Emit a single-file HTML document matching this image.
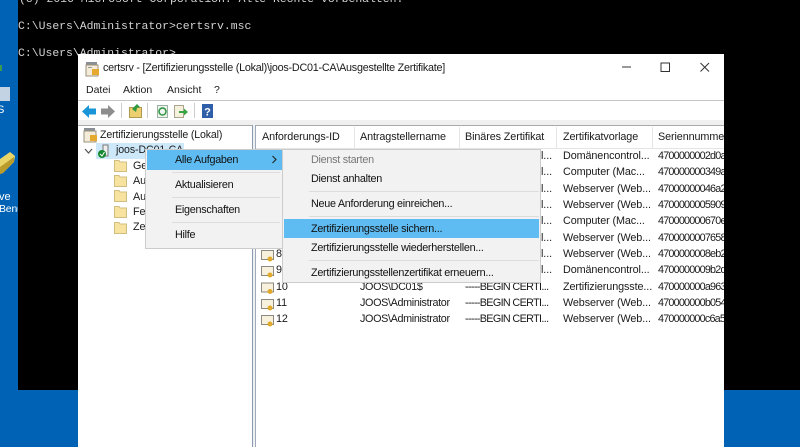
<!DOCTYPE html>
<html><head><meta charset="utf-8">
<style>
html,body{margin:0;padding:0;width:800px;height:447px;overflow:hidden;background:#0062b4}
*{box-sizing:border-box}
.a{position:absolute;white-space:nowrap}
#root{position:relative;width:800px;height:447px;overflow:hidden;font-family:"Liberation Sans",sans-serif;font-size:10.8px;color:#1a1a1a;filter:blur(.3px)}
.con{font-family:"Liberation Mono",monospace;font-size:11.45px;color:#d4d4d4}
.r{line-height:14px;height:14px;letter-spacing:-.1px}
.m{font-size:10.8px;color:#111;line-height:14px;letter-spacing:-.27px}
.b{letter-spacing:-.65px}
.n{letter-spacing:-.8px}
svg{position:absolute;overflow:visible}
</style></head><body><div id="root">
<!-- desktop -->
<div class="a" style="left:0;top:0;width:18px;height:447px;background:#0062b4"></div>
<div class="a" style="left:0;top:65px;width:2px;height:6px;background:#3a9a50"></div>
<div class="a" style="left:0;top:87px;width:10px;height:14px;background:#c3d3e4"></div>
<div class="a" style="left:-3px;top:104px;font-size:11px;color:#fff;line-height:13px">S</div>
<svg style="left:0;top:150px" width="18" height="30"><path d="M0 9L10 2L15 6L14 12L3 23L0 24Z" fill="#e9d468"/><path d="M0 17L14 7L14 12L3 23L0 24Z" fill="#b99c2c"/></svg>
<div class="a" style="left:-1px;top:191px;font-size:11px;color:#fff;line-height:13px">ve</div>
<div class="a" style="left:-1px;top:203px;width:19px;overflow:hidden;font-size:10.5px;letter-spacing:-.2px;color:#fff;line-height:13px">Benu</div>
<!-- console -->
<div class="a" style="left:18px;top:0;width:782px;height:390px;background:#000"></div>
<div class="a con" style="left:19px;top:-7px">(c) 2016 Microsoft Corporation. Alle Rechte vorbehalten.</div>
<div class="a con" style="left:18px;top:20px">C:\Users\Administrator&gt;certsrv.msc</div>
<div class="a con" style="left:18px;top:47px">C:\Users\Administrator&gt;</div>
<!-- window -->
<div class="a" style="left:78px;top:54px;width:646px;height:393px;background:#fff"></div>
<svg style="left:85px;top:61px" width="16" height="16"><rect x="1" y="1" width="11" height="3" fill="#8a8f96"/><rect x="1" y="4" width="12" height="11" fill="#f4ecd8" stroke="#9a927c"/><rect x="7" y="8" width="7" height="6" fill="#e4a92e"/><rect x="3" y="6" width="4" height="1" fill="#999"/></svg>
<div class="a" style="left:103px;top:61px;font-size:10.8px;line-height:14px;color:#1a1a1a;letter-spacing:-.25px">certsrv - [Zertifizierungsstelle (Lokal)\joos-DC01-CA\Ausgestellte Zertifikate]</div>
<svg style="left:655px;top:58px" width="65" height="20"><path d="M-33 9H-24" stroke="#333" stroke-width="1"/><rect x="6" y="5" width="8.5" height="8.5" fill="none" stroke="#333"/><path d="M45.500 5L54 13.500M54 5L45.500 13.500" stroke="#333"/></svg>
<div class="a" style="left:86px;top:83px;font-size:10.5px;line-height:14px">Datei</div>
<div class="a" style="left:123px;top:83px;font-size:10.5px;line-height:14px">Aktion</div>
<div class="a" style="left:167px;top:83px;font-size:10.5px;line-height:14px">Ansicht</div>
<div class="a" style="left:214px;top:83px;font-size:10.5px;line-height:14px">?</div>
<div class="a" style="left:78px;top:100px;width:646px;height:1px;background:#c6c6c6"></div>
<!-- toolbar -->
<svg style="left:78px;top:101px" width="160" height="22">
<path d="M4 10.500L11 4V7.500H18V13.500H11V17Z" fill="#1a96d8"/>
<path d="M37 10.500L30 4V7.500H23V13.500H30V17Z" fill="#8d8d8d"/>
<rect x="43" y="2" width="1" height="15" fill="#ccc"/>
<rect x="51.500" y="6.500" width="12" height="10" fill="#eccf6e" stroke="#b09a52"/><path d="M54 8L59 3L62 6L59 7L58 11Z" fill="#2f9a3f"/>
<rect x="69" y="2" width="1" height="15" fill="#ccc"/>
<rect x="79.500" y="4.500" width="10" height="12" fill="#eef4ee" stroke="#9bb2a0"/><circle cx="84.500" cy="10.500" r="3.500" fill="none" stroke="#2d9440" stroke-width="1.500"/>
<rect x="96.500" y="4.500" width="9" height="12" fill="#f6f1dc" stroke="#a8a48e"/><path d="M101 10H106V7.500L110 11L106 14.500V12H101Z" fill="#35a63f"/>
<rect x="116" y="2" width="1" height="15" fill="#ccc"/>
<rect x="124" y="3" width="11" height="14" fill="#2f5fa8"/>
<text x="129.500" y="14.500" font-size="11" font-weight="bold" fill="#fff" text-anchor="middle" font-family="Liberation Sans">?</text>
</svg>
<div class="a" style="left:78px;top:120px;width:646px;height:5px;background:#f0f0f0"></div>
<!-- tree pane -->
<div class="a" style="left:78px;top:125px;width:175px;height:322px;background:#fff;border-top:1px solid #a9a9a9"></div>
<div class="a" style="left:252px;top:125px;width:4px;height:322px;background:#eef0f3;border-left:1px solid #8c9cb0;border-right:1px solid #a0a9b8"></div>
<div class="a" style="left:256px;top:125px;width:468px;height:1px;background:#a9a9a9"></div>
<svg style="left:83px;top:127px" width="15" height="16"><rect x="1" y="1" width="11" height="3" fill="#8a8f96"/><rect x="1" y="4" width="12" height="11" fill="#f4ecd8" stroke="#9a927c"/><rect x="7" y="8" width="7" height="6" fill="#e4a92e"/></svg>
<div class="a r" style="left:100px;top:128px;font-size:10.6px;letter-spacing:-.15px">Zertifizierungsstelle (Lokal)</div>
<svg style="left:84px;top:147px" width="10" height="8"><path d="M1 2L4.500 6L8 2" fill="none" stroke="#555" stroke-width="1.200"/></svg>
<div class="a" style="left:96px;top:143px;width:88px;height:16px;background:#cde8f9"></div>
<svg style="left:97px;top:144px" width="14" height="15"><rect x="6" y="1" width="5" height="11" fill="#eee" stroke="#777"/><circle cx="5" cy="10" r="4" fill="#15872f"/><path d="M3 10L5 12L7.500 8" fill="none" stroke="#fff"/></svg>
<div class="a r" style="left:116px;top:143px;font-size:10.6px">joos-DC01-CA</div>
<svg style="left:114px;top:160px" width="16" height="80" fill="#f7e2a0" stroke="#d0bd80"><path d="M.5 .5H5L6 2H12.500V11.500H.5Z"/><path d="M.5 15.500H5L6 17H12.500V26.500H.5Z"/><path d="M.5 30.500H5L6 32H12.500V41.500H.5Z"/><path d="M.5 46.500H5L6 48H12.500V57.500H.5Z"/><path d="M.5 62.500H5L6 64H12.500V73.500H.5Z"/></svg>
<div class="a r" style="left:133px;top:159px">Ge</div>
<div class="a r" style="left:133px;top:174px">Au</div>
<div class="a r" style="left:133px;top:190px">Au</div>
<div class="a r" style="left:133px;top:205px">Fel</div>
<div class="a r" style="left:133px;top:220px">Ze</div>
<!-- header -->
<div class="a" style="left:256px;top:126px;width:468px;height:23px;background:#fff;border-bottom:1px solid #e4e4e4"></div>
<div class="a" style="left:354px;top:127px;width:1px;height:21px;background:#e5e5e5"></div>
<div class="a" style="left:459px;top:127px;width:1px;height:21px;background:#e5e5e5"></div>
<div class="a" style="left:556px;top:127px;width:1px;height:21px;background:#e5e5e5"></div>
<div class="a" style="left:652px;top:127px;width:1px;height:21px;background:#e5e5e5"></div>
<div class="a r" style="left:262px;top:130px">Anforderungs-ID</div>
<div class="a r" style="left:360px;top:130px">Antragstellername</div>
<div class="a r" style="left:465px;top:130px">Binäres Zertifikat</div>
<div class="a r" style="left:563px;top:130px">Zertifikatvorlage</div>
<div class="a r" style="left:658px;top:130px;width:66px;overflow:hidden">Seriennummer</div>
<!-- col 4 -->
<div class="a r" style="left:563px;top:149px">Domänencontrol...</div>
<div class="a r" style="left:563px;top:165px">Computer (Mac...</div>
<div class="a r" style="left:563px;top:182px">Webserver (Web...</div>
<div class="a r" style="left:563px;top:198px">Webserver (Web...</div>
<div class="a r" style="left:563px;top:214px">Computer (Mac...</div>
<div class="a r" style="left:563px;top:231px">Webserver (Web...</div>
<div class="a r" style="left:563px;top:247px">Webserver (Web...</div>
<div class="a r" style="left:563px;top:263px">Domänencontrol...</div>
<div class="a r" style="left:563px;top:280px">Zertifizierungsste...</div>
<div class="a r" style="left:563px;top:296px">Webserver (Web...</div>
<div class="a r" style="left:563px;top:312px">Webserver (Web...</div>
<!-- col 5 -->
<div class="a" style="left:658px;top:149px;width:66px;height:180px;overflow:hidden">
<div class="a r n" style="left:0;top:0">4700000002d0a</div>
<div class="a r n" style="left:0;top:16px">470000000349a</div>
<div class="a r n" style="left:0;top:33px">47000000046a2</div>
<div class="a r n" style="left:0;top:49px">4700000005909</div>
<div class="a r n" style="left:0;top:65px">470000000670e</div>
<div class="a r n" style="left:0;top:82px">4700000007658</div>
<div class="a r n" style="left:0;top:98px">4700000008eb2</div>
<div class="a r n" style="left:0;top:114px">4700000009b2d</div>
<div class="a r n" style="left:0;top:131px">470000000a963</div>
<div class="a r n" style="left:0;top:147px">470000000b054</div>
<div class="a r n" style="left:0;top:163px">470000000c6a5</div>
</div>
<!-- truncated bits col 3 -->
<div class="a r" style="left:541px;top:149px">l...</div>
<div class="a r" style="left:541px;top:165px">l...</div>
<div class="a r" style="left:541px;top:182px">l...</div>
<div class="a r" style="left:541px;top:198px">l...</div>
<div class="a r" style="left:541px;top:214px">l...</div>
<div class="a r" style="left:541px;top:231px">l...</div>
<div class="a r" style="left:541px;top:247px">l...</div>
<div class="a r" style="left:541px;top:263px">l...</div>
<!-- rows -->
<svg style="left:260px;top:248px" width="16" height="80" fill="#f6f0dc" stroke="#8c8a80"><g><rect x="1.500" y="2.500" width="12" height="9"/><circle cx="10" cy="11" r="2.500" fill="#e0a92a" stroke="none"/></g><g transform="translate(0,16)"><rect x="1.500" y="2.500" width="12" height="9"/><circle cx="10" cy="11" r="2.500" fill="#e0a92a" stroke="none"/></g><g transform="translate(0,32.500)"><rect x="1.500" y="2.500" width="12" height="9"/><circle cx="10" cy="11" r="2.500" fill="#e0a92a" stroke="none"/></g><g transform="translate(0,49)"><rect x="1.500" y="2.500" width="12" height="9"/><circle cx="10" cy="11" r="2.500" fill="#e0a92a" stroke="none"/></g><g transform="translate(0,65)"><rect x="1.500" y="2.500" width="12" height="9"/><circle cx="10" cy="11" r="2.500" fill="#e0a92a" stroke="none"/></g></svg>
<div class="a r" style="left:276px;top:247px">8</div>
<div class="a r" style="left:276px;top:263px">9</div>
<div class="a r" style="left:276px;top:280px">10</div>
<div class="a r" style="left:276px;top:296px">11</div>
<div class="a r" style="left:276px;top:312px">12</div>
<div class="a r" style="left:360px;top:280px;letter-spacing:-.35px">JOOS\DC01$</div>
<div class="a r" style="left:360px;top:296px;letter-spacing:-.35px">JOOS\Administrator</div>
<div class="a r" style="left:360px;top:312px;letter-spacing:-.35px">JOOS\Administrator</div>
<div class="a r b" style="left:465px;top:280px">-----BEGIN CERTI...</div>
<div class="a r b" style="left:465px;top:296px">-----BEGIN CERTI...</div>
<div class="a r b" style="left:465px;top:312px">-----BEGIN CERTI...</div>
<!-- menu 1 -->
<div class="a" style="left:145px;top:149px;width:137px;height:100px;background:#f2f2f2;border:1px solid #ccc;border-right:0"></div>
<div class="a" style="left:147px;top:150px;width:135px;height:20px;background:#5ebcf2"></div>
<div class="a m" style="left:175px;top:153px">Alle Aufgaben</div>
<svg style="left:271px;top:155px" width="8" height="9"><path d="M1.500 1L5 4.500L1.500 8" fill="none" stroke="#222" stroke-width="1.100"/></svg>
<div class="a" style="left:172px;top:172px;width:108px;height:1px;background:#dcdcdc"></div>
<div class="a m" style="left:175px;top:178px">Aktualisieren</div>
<div class="a" style="left:172px;top:197px;width:108px;height:1px;background:#dcdcdc"></div>
<div class="a m" style="left:175px;top:203px">Eigenschaften</div>
<div class="a" style="left:172px;top:222px;width:108px;height:1px;background:#dcdcdc"></div>
<div class="a m" style="left:175px;top:228px">Hilfe</div>
<!-- menu 2 -->
<div class="a" style="left:282px;top:149px;width:259px;height:134px;background:#f2f2f2;border:1px solid #ccc"></div>
<div class="a m" style="left:311px;top:153px;color:#777">Dienst starten</div>
<div class="a m" style="left:311px;top:172px">Dienst anhalten</div>
<div class="a" style="left:309px;top:191px;width:230px;height:1px;background:#dcdcdc"></div>
<div class="a m" style="left:311px;top:197px">Neue Anforderung einreichen...</div>
<div class="a" style="left:309px;top:216px;width:230px;height:1px;background:#dcdcdc"></div>
<div class="a" style="left:284px;top:219px;width:255px;height:19px;background:#5ebcf2"></div>
<div class="a m" style="left:311px;top:222px">Zertifizierungsstelle sichern...</div>
<div class="a m" style="left:311px;top:241px">Zertifizierungsstelle wiederherstellen...</div>
<div class="a" style="left:309px;top:260px;width:230px;height:1px;background:#dcdcdc"></div>
<div class="a m" style="left:311px;top:266px">Zertifizierungsstellenzertifikat erneuern...</div>
</div></body></html>
